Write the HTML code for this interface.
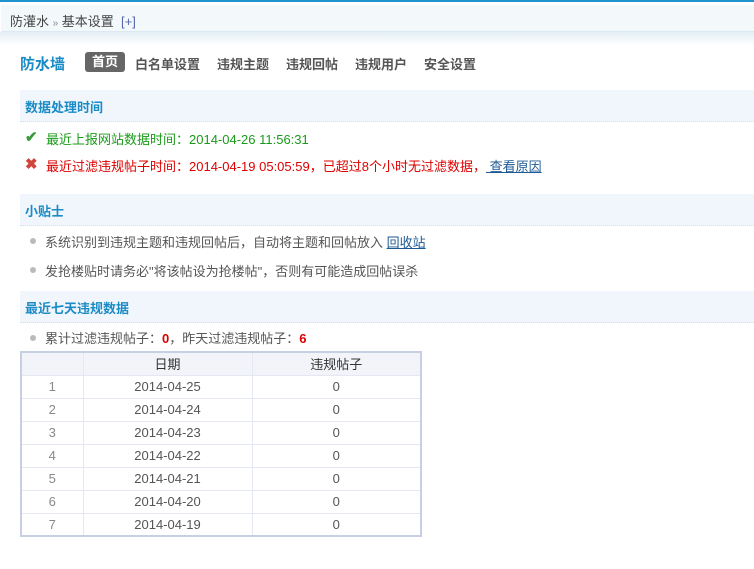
<!DOCTYPE html>
<html><head><meta charset="utf-8"><style>
*{margin:0;padding:0;box-sizing:border-box}
body{width:754px;height:569px;background:#fff;font-family:"Liberation Sans","Noto Sans CJK SC",sans-serif;font-size:12px;color:#333;position:relative;overflow:hidden}
.a{position:absolute;white-space:nowrap}
.top{left:0;top:0;width:754px;height:2px;background:#1e94cf}
.bc{left:1px;top:5px;width:753px;height:27px;background:#f3f8fb;border-bottom:1px solid #dde9f2}
.shadow{left:0;top:32px;width:754px;height:14px;background:linear-gradient(#e4eef5,#fff)}
.sec{left:20px;width:734px;height:32px;background:#f0f6fc;border-bottom:1px dotted #cfe1ef;color:#1b8bc5;font-weight:bold;font-size:13px;padding:7px 5px}
.nav span{position:absolute;font-weight:bold;font-size:13px;color:#555;top:0}
.dot{position:absolute;width:6px;height:6px;border-radius:3px;background:#bbb}
table{position:absolute;left:20px;top:351px;width:402px;border-collapse:collapse;border:2px solid #c7d0e2}
td,th{height:23px;border:1px solid #e3e8f2;text-align:center;font-weight:normal;font-size:13px;color:#555}
th{background:#f2f4f9;color:#333}
td.n{color:#888}
</style></head><body>
<div class="a top"></div>
<div class="a bc"></div>
<div class="a" style="left:10px;top:11px;font-size:13px;color:#444">防灌水 <span style="color:#889;font-size:10px">»</span> 基本设置 &nbsp;<span style="color:#5566aa">[+]</span></div>
<div class="a shadow"></div>
<div class="a" style="left:20px;top:53px;font-size:15px;font-weight:bold;color:#1b8bc5">防水墙</div>
<div class="a" style="left:85px;top:52px;width:40px;height:20px;background:#666;border-radius:3px;color:#fff;font-weight:bold;font-size:13px;text-align:center;line-height:20px">首页</div>
<div class="a nav" style="left:0;top:54px;width:754px;height:20px">
<span style="left:135px">白名单设置</span><span style="left:217px">违规主题</span><span style="left:286px">违规回帖</span><span style="left:355px">违规用户</span><span style="left:424px">安全设置</span></div>
<div class="a sec" style="top:90px">数据处理时间</div>
<div class="a" style="left:25px;top:128px;color:#3a9a3a;font-size:15px;font-weight:bold">✔</div>
<div class="a" style="left:46px;top:129px;color:#1a9a1a;font-size:13px">最近上报网站数据时间：2014-04-26 11:56:31</div>
<div class="a" style="left:25px;top:155px;color:#d0443a;font-size:15px;font-weight:bold">✖</div>
<div class="a" style="left:46px;top:156px;color:#d00;font-size:13px">最近过滤违规帖子时间：2014-04-19 05:05:59，已超过8个小时无过滤数据，<span style="color:#1f5a94;text-decoration:underline"> 查看原因</span></div>
<div class="a sec" style="top:194px">小贴士</div>
<div class="dot" style="left:30px;top:238px"></div>
<div class="a" style="left:45px;top:232px;font-size:13px;color:#555">系统识别到违规主题和违规回帖后，自动将主题和回帖放入 <span style="color:#1f5a94;text-decoration:underline">回收站</span></div>
<div class="dot" style="left:30px;top:267px"></div>
<div class="a" style="left:45px;top:261px;font-size:13px;color:#555">发抢楼贴时请务必"将该帖设为抢楼帖"，否则有可能造成回帖误杀</div>
<div class="a sec" style="top:291px">最近七天违规数据</div>
<div class="dot" style="left:30px;top:335px"></div>
<div class="a" style="left:45px;top:328px;font-size:13px;color:#555">累计过滤违规帖子：<b style="color:#d00">0</b>，昨天过滤违规帖子：<b style="color:#d00">6</b></div>
<table>
<tr><th style="width:62px"></th><th style="width:169px">日期</th><th>违规帖子</th></tr>
<tr><td class="n">1</td><td>2014-04-25</td><td>0</td></tr>
<tr><td class="n">2</td><td>2014-04-24</td><td>0</td></tr>
<tr><td class="n">3</td><td>2014-04-23</td><td>0</td></tr>
<tr><td class="n">4</td><td>2014-04-22</td><td>0</td></tr>
<tr><td class="n">5</td><td>2014-04-21</td><td>0</td></tr>
<tr><td class="n">6</td><td>2014-04-20</td><td>0</td></tr>
<tr><td class="n">7</td><td>2014-04-19</td><td>0</td></tr>
</table>
</body></html>
